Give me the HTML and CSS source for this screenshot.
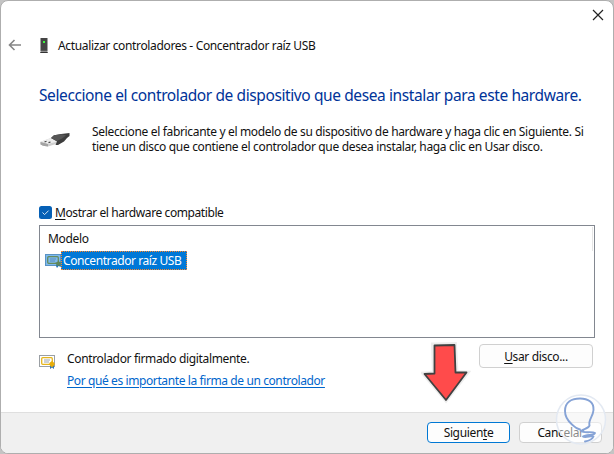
FILE: index.html
```html
<!DOCTYPE html>
<html lang="es">
<head>
    <meta charset="UTF-8">
    <meta name="viewport" content="width=device-width, initial-scale=1.0">
    <title>Actualizar controladores</title>
    <link rel="stylesheet" href="styles.css">
</head>
<body>
    <div class="dialog">
        <div class="titlebar">
            <svg class="close" width="12" height="12" viewBox="0 0 12 12">
                <path d="M1 1 L11 11 M11 1 L1 11" stroke="#222" stroke-width="1.2" fill="none"/>
            </svg>
        </div>

        <div class="nav">
            <svg class="back" width="14" height="12" viewBox="0 0 14 12">
                <path d="M13 6 H1.5 M6.5 1 L1.5 6 L6.5 11" stroke="#858585" stroke-width="1.6" fill="none"/>
            </svg>
            <svg class="device" width="8" height="15" viewBox="0 0 8 15">
                <rect x="0.5" y="0" width="7" height="13" fill="#444"/>
                <rect x="3" y="3" width="2" height="2" fill="#3df53d"/>
                <path d="M1 13 H7 L8 15 H0 Z" fill="#333"/>
                <path d="M0.5 13.3 H7.5" stroke="#ddd" stroke-width="0.7"/>
            </svg>
            <span class="nav-title">Actualizar controladores - Concentrador raíz USB</span>
        </div>

        <div class="content">
            <h1>Seleccione el controlador de dispositivo que desea instalar para este hardware.</h1>

            <div class="intro">
                <svg class="usb" width="32" height="16" viewBox="0 0 32 16">
                    <path d="M0.5 9.8 L11 6 L18 10 L16 12 L8 14.5 L3 13.8 L0.5 12.3 Z" fill="#cfcfcf"/>
                    <path d="M0.5 9.8 L11 6 L18 9.5 L8 12 Z" fill="#ededed"/>
                    <path d="M0.5 10 L8 12 L8 14.5 L3 13.8 L0.5 12.5 Z" fill="#a3a3a3"/>
                    <path d="M4.5 10 L6.5 9.3 M8.5 10.6 L10.5 10" stroke="#444" stroke-width="1.2"/>
                    <path d="M11 6 L14 3.2 L21 2 L29.5 1 V4 L27 6 L24 9.5 L18 13 L15.5 13 L17 9.5 Z" fill="#3d3d3d"/>
                    <path d="M11 6 L14 3.2 L22 2.2 L26 3.4 L22 6.5 L17 9 Z" fill="#565656"/>
                </svg>
                <p>
                    <span class="line">Seleccione el fabricante y el modelo de su dispositivo de hardware y haga clic en Siguiente. Si</span>
                    <span class="line">tiene un disco que contiene el controlador que desea instalar, haga clic en Usar disco.</span>
                </p>
            </div>

            <div class="compatible">
                <svg class="check" width="13" height="13" viewBox="0 0 13 13">
                    <rect width="13" height="13" rx="2.5" fill="#0560b6"/>
                    <path d="M3.5 6.5 L5.6 8.6 L9.6 4.6" stroke="#d5e6f5" stroke-width="1" fill="none"/>
                </svg>
                <span class="compatible-label"><u>M</u>ostrar el hardware compatible</span>
            </div>

            <div class="list">
                <div class="list-header"><span>Modelo</span></div>
                <div class="list-row">
                    <svg width="17" height="15" viewBox="0 0 17 15">
                        <rect x="0.5" y="1.5" width="15" height="11" fill="#7db9ee" stroke="#5a93c4"/>
                        <rect x="2.7" y="3.7" width="10.6" height="6.6" rx="1" fill="none" stroke="#668c5c" stroke-width="1.3"/>
                        <path d="M5 6 H11 M5 8 H10" stroke="#5b8cb5" stroke-width="1"/>
                        <path d="M11 13 L12 10 H15 L16 14 L13.5 13 L12 15 Z" fill="#1b70bd"/>
                        <path d="M13.5 7.5 L14.6 9 L16.5 9.5 L15.5 11 L15.5 13 L13.5 12.4 L11.5 13 L11.5 11 L10.3 9.7 L12.3 9 Z" fill="#5f865a"/>
                    </svg>
                    <span class="selected">Concentrador raíz USB</span>
                </div>
            </div>

            <div class="signing">
                <svg class="cert" width="17" height="15" viewBox="0 0 17 15">
                    <rect x="0.5" y="1.5" width="15" height="11" fill="#fff" stroke="#9a9fa4"/>
                    <rect x="2.7" y="3.7" width="10.6" height="6.6" rx="1" fill="none" stroke="#e5b51c" stroke-width="1.3"/>
                    <path d="M5 6 H11 M5 8 H10" stroke="#9da3a8" stroke-width="1"/>
                    <path d="M11 15 V11 H15 V15 L13 13.6 Z" fill="#2f74b8"/>
                    <path d="M13 7 L14.5 8.3 L16 10 L14.5 12 L13 13.3 L11.3 12 L10 10 L11.3 8.3 Z" fill="#e8ae0b"/>
                </svg>
                <div class="signing-text">
                    <span class="signed">Controlador firmado digitalmente.</span>
                    <a class="why">Por qué es importante la firma de un controlador</a>
                </div>
                <div class="button disk"><span><u>U</u>sar disco...</span></div>
            </div>
        </div>

        <div class="footer">
            <div class="button next"><span>Siguien<u>t</u>e</span></div>
            <div class="button cancel"><span>Cancelar</span></div>
        </div>
    </div>

    <svg class="pointer" width="50" height="64" viewBox="0 0 50 64">
        <path d="M12.5 4 L33.5 3.5 L35 31.5 L45.5 32 L25 58.5 L3.5 33 L13.5 32.5 Z" fill="none" stroke="#000" stroke-opacity="0.07" stroke-width="5"/>
        <path d="M13.5 4.5 L33.5 4 L34.5 31.5 L45.5 31.5 L25 59 L3.5 33 L13.5 32.5 Z" fill="#ff4b4b" stroke="#414141" stroke-width="1.8" stroke-linejoin="round"/>
    </svg>

    <svg class="watermark" width="54" height="54" viewBox="0 0 54 54">
        <circle cx="27" cy="26.5" r="24.5" fill="#fff" fill-opacity="0.5" stroke="#e3e9f2" stroke-width="1.5"/>
        <path d="M26 36.5 C21 35.5 20 33 17.5 31 C13 27 11 23 11 18 C11 9 18 5.5 26 5.5 C34 5.5 40 9 39.5 17 C39 24 34 27 35.5 32.5 C35 35 30 36 27 38 C30 40.5 38 38 41 40 C41 43 32 41 29 43.5 C31 45.5 38 42 39.5 43.5 C38 47 34 48 31 48.5" fill="none" stroke="#86a3d6" stroke-width="1.9" stroke-linecap="round" stroke-linejoin="round"/>
    </svg>
</body>
</html>
```

FILE: styles.css
```css
body {
    margin: 0;
    height: 454px;
    background-color: #c4c4c4;
    font-family: "Noto Sans", "Open Sans", sans-serif;
    font-size: 12px;
    letter-spacing: -0.35px;
    color: #111;
    overflow: hidden;
    position: relative;
}

svg {
    display: block;
    flex: none;
}

span, a, h1 {
    white-space: nowrap;
}

u {
    text-underline-offset: 2px;
}

.dialog {
    display: flex;
    flex-direction: column;
    box-sizing: border-box;
    height: 454px;
    border: 1px solid #aeaeae;
    border-radius: 8px;
    background-color: #fff;
    overflow: hidden;
}

.titlebar {
    display: flex;
    justify-content: flex-end;
    height: 32px;
    padding: 8px 9px 0 0;
    box-sizing: border-box;
}

.nav {
    display: flex;
    align-items: center;
    height: 24px;
    padding-left: 7px;
}

.device {
    margin-left: 18px;
}

.nav-title {
    margin-left: 10px;
}

.content {
    flex: 1;
    padding: 0 18px 0 38px;
}

h1 {
    margin: 26px 0 0;
    font-size: 15.5px;
    font-weight: 400;
    line-height: 24px;
    color: #003399;
    letter-spacing: -0.4px;
}

.intro {
    display: flex;
    margin-top: 17px;
}

.usb {
    margin: 8px 0 0 1px;
}

.intro p {
    margin: 0 0 0 20px;
    line-height: 15px;
    letter-spacing: -0.335px;
}

.line {
    display: block;
}

.compatible {
    display: flex;
    align-items: center;
    margin-top: 49px;
    height: 18px;
}

.compatible-label {
    margin-left: 3px;
    letter-spacing: -0.41px;
}

.list {
    box-sizing: border-box;
    height: 113px;
    margin-top: 4px;
    border: 1px solid #828790;
    padding: 1px 1px 0 5px;
}

.list-header {
    height: 24px;
    line-height: 24px;
    border-right: 1px solid #e5e5e5;
    padding-left: 3px;
}

.list-row {
    display: flex;
    align-items: center;
    height: 19px;
}

.selected {
    box-sizing: border-box;
    width: 126px;
    height: 19px;
    margin-left: -1px;
    padding-left: 1px;
    border: 1px dotted #ff8728;
    background-color: #0078d7;
    color: #fff;
    line-height: 17px;
    letter-spacing: -0.42px;
}

.signing {
    display: flex;
    align-items: flex-start;
}

.cert {
    margin-top: 16px;
}

.signing-text {
    display: flex;
    flex-direction: column;
    gap: 6px;
    margin: 13px auto 0 11px;
    line-height: 16px;
}

.why {
    color: #0066cc;
    text-decoration: underline;
    text-underline-offset: 2px;
    letter-spacing: -0.4px;
}

.button {
    display: flex;
    align-items: center;
    justify-content: center;
    box-sizing: border-box;
    border: 1px solid #d0d0d0;
    border-radius: 4px;
    background-color: #fdfdfd;
}

.disk {
    width: 114px;
    height: 24px;
    margin: 6px 2px 0 0;
}

.footer {
    display: flex;
    gap: 9px;
    justify-content: flex-end;
    box-sizing: border-box;
    height: 41px;
    padding: 9px 11px 0 0;
    border-top: 1px solid #dfdfdf;
    background-color: #f0f0f0;
}

.next, .cancel {
    width: 83px;
    height: 21px;
}

.next {
    border-color: #0078d4;
}

/* Drawn over the dialog */
.pointer {
    position: absolute;
    left: 421px;
    top: 341px;
}

.watermark {
    position: absolute;
    left: 554px;
    top: 393px;
}
```
